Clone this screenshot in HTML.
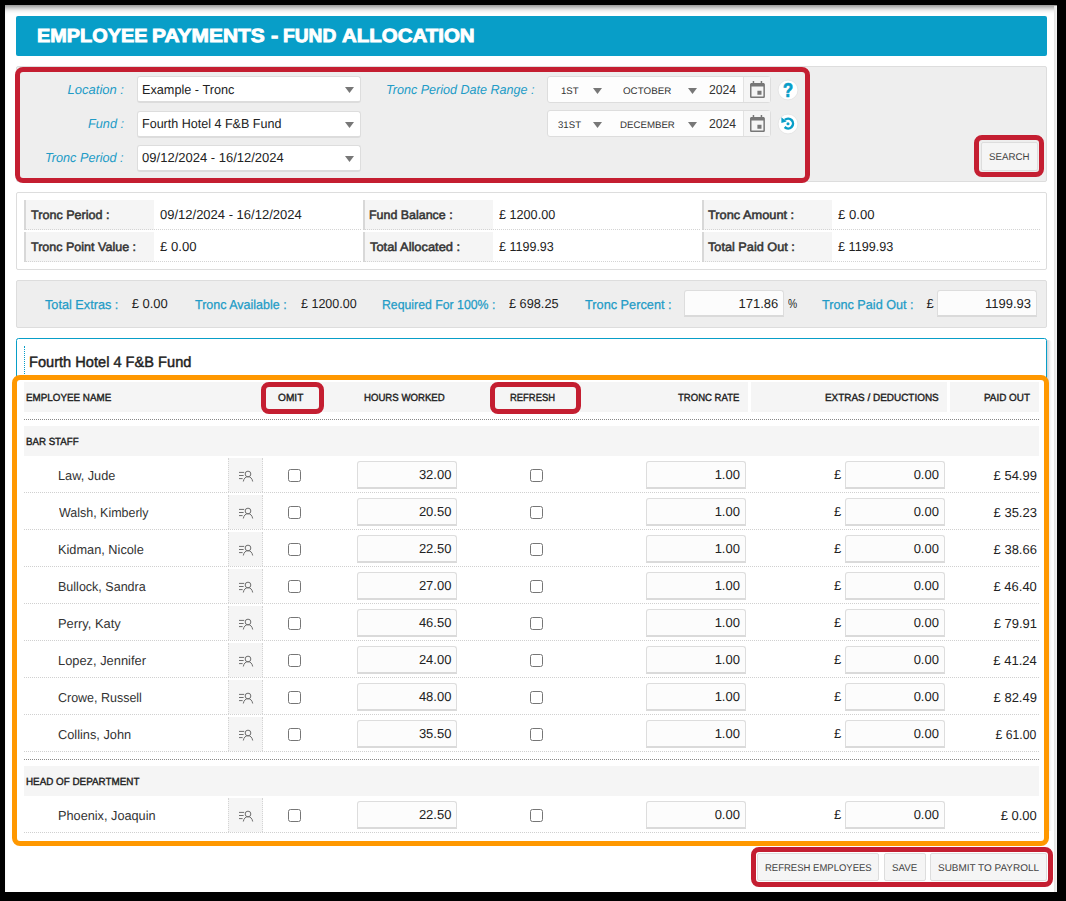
<!DOCTYPE html>
<html><head><meta charset="utf-8"><title>Employee Payments - Fund Allocation</title>
<style>
html,body{margin:0;padding:0;background:#000;}
body{width:1066px;height:901px;background:#000;position:relative;overflow:hidden;font-family:"Liberation Sans",sans-serif;}
.t{position:absolute;white-space:nowrap;font-family:"Liberation Sans",sans-serif;text-rendering:geometricPrecision;}
</style></head><body>
<div style="position:absolute;left:5px;top:5px;width:1052px;height:887px;box-sizing:border-box;background:#fff;box-shadow:inset 0 7px 6px -5px rgba(0,0,0,.55);"></div>
<div style="position:absolute;left:1054px;top:6px;width:3px;height:886px;box-sizing:border-box;background:linear-gradient(90deg,#e2e2e2,#f4f4f4);"></div>
<div style="position:absolute;left:16px;top:16px;width:1031px;height:40px;box-sizing:border-box;background:#089ec8;border-radius:2px;"></div>
<div class="t" style="top:24.60px;line-height:24px;font-size:19px;color:#fff;font-weight:bold;left:36.64px;transform:scaleX(1.0472);transform-origin:0 50%;-webkit-text-stroke:0.9px #fff;">EMPLOYEE</div>
<div class="t" style="top:24.60px;line-height:24px;font-size:19px;color:#fff;font-weight:bold;left:151.58px;transform:scaleX(1.1011);transform-origin:0 50%;-webkit-text-stroke:0.9px #fff;">PAYMENTS</div>
<div class="t" style="top:24.60px;line-height:24px;font-size:19px;color:#fff;font-weight:bold;left:271.20px;transform:scaleX(1.1429);transform-origin:0 50%;-webkit-text-stroke:0.9px #fff;">-</div>
<div class="t" style="top:24.60px;line-height:24px;font-size:19px;color:#fff;font-weight:bold;left:283.29px;transform:scaleX(1.0108);transform-origin:0 50%;-webkit-text-stroke:0.9px #fff;">FUND</div>
<div class="t" style="top:24.60px;line-height:24px;font-size:19px;color:#fff;font-weight:bold;left:342.27px;transform:scaleX(1.0773);transform-origin:0 50%;-webkit-text-stroke:0.9px #fff;">ALLOCATION</div>
<div style="position:absolute;left:16px;top:66px;width:1031px;height:116px;box-sizing:border-box;background:#eee;border:1px solid #ddd;border-radius:2px;"></div>
<div class="t" style="top:79.50px;line-height:20px;font-size:13px;color:#219bc6;font-style:italic;left:67.60px;">Location :</div>
<div class="t" style="top:113.50px;line-height:20px;font-size:13px;color:#219bc6;font-style:italic;left:88.01px;transform:scaleX(0.9766);transform-origin:0 50%;">Fund :</div>
<div class="t" style="top:147.50px;line-height:20px;font-size:13px;color:#219bc6;font-style:italic;left:45.43px;transform:scaleX(0.9739);transform-origin:0 50%;">Tronc Period :</div>
<div class="t" style="top:79.50px;line-height:20px;font-size:13px;color:#219bc6;font-style:italic;left:385.94px;transform:scaleX(0.9667);transform-origin:0 50%;">Tronc Period Date Range :</div>
<div style="position:absolute;left:137px;top:76px;width:224px;height:27px;box-sizing:border-box;background:#fff;border:1px solid #ddd;border-bottom:2px solid #dcdcdc;border-radius:3px;"><svg style="position:absolute;right:6.5px;top:10.2px" width="9" height="6" viewBox="0 0 9 6"><path d="M0 0H9L4.5 6Z" fill="#777"/></svg></div>
<div style="position:absolute;left:137px;top:110.5px;width:224px;height:27px;box-sizing:border-box;background:#fff;border:1px solid #ddd;border-bottom:2px solid #dcdcdc;border-radius:3px;"><svg style="position:absolute;right:6.5px;top:10.2px" width="9" height="6" viewBox="0 0 9 6"><path d="M0 0H9L4.5 6Z" fill="#777"/></svg></div>
<div style="position:absolute;left:137px;top:144.5px;width:224px;height:27px;box-sizing:border-box;background:#fff;border:1px solid #ddd;border-bottom:2px solid #dcdcdc;border-radius:3px;"><svg style="position:absolute;right:6.5px;top:10.2px" width="9" height="6" viewBox="0 0 9 6"><path d="M0 0H9L4.5 6Z" fill="#777"/></svg></div>
<div class="t" style="top:79.80px;line-height:20px;font-size:13px;color:#222;left:141.62px;transform:scaleX(0.9757);transform-origin:0 50%;">Example - Tronc</div>
<div class="t" style="top:113.80px;line-height:20px;font-size:13px;color:#222;left:141.64px;transform:scaleX(0.9644);transform-origin:0 50%;">Fourth Hotel 4 F&amp;B Fund</div>
<div class="t" style="top:147.80px;line-height:20px;font-size:13px;color:#222;left:142.10px;">09/12/2024 - 16/12/2024</div>
<div style="position:absolute;left:547px;top:76px;width:224px;height:27px;box-sizing:border-box;background:#fdfdfd;border:1px solid #ddd;border-radius:3px;"></div>
<div style="position:absolute;left:743px;top:77px;width:27px;height:25px;box-sizing:border-box;background:#f5f5f5;border-left:1px solid #e2e2e2;"><svg style="position:absolute;left:5.5px;top:4.1px" width="15" height="17" viewBox="0 0 15 17"><path d="M2.700 0h1.500v2.500H2.700zM10.700 0h1.500v2.500h-1.500z" fill="#777"/><path d="M1.600 1.900h11.700c.9 0 1.600.7 1.600 1.600v11.900c0 .9-.7 1.600-1.600 1.600H1.600c-.9 0-1.600-.7-1.600-1.600V3.500c0-.9.7-1.600 1.600-1.600zM1.500 5.600v9.900h11.900V5.600zM7.400 9.700h4.100v4.100H7.400z" fill="#777" fill-rule="evenodd"/></svg></div>
<div class="t" style="top:81.60px;line-height:20px;font-size:9.5px;color:#333;left:560.79px;transform:scaleX(1.0139);transform-origin:0 50%;">1ST</div>
<div class="t" style="top:81.60px;line-height:20px;font-size:9.5px;color:#333;left:623.34px;transform:scaleX(1.0316);transform-origin:0 50%;">OCTOBER</div>
<div class="t" style="top:80.10px;line-height:20px;font-size:13px;color:#333;left:709.44px;transform:scaleX(0.9378);transform-origin:0 50%;">2024</div>
<svg style="position:absolute;left:593px;top:88px" width="9" height="6" viewBox="0 0 9 6"><path d="M0 0H9L4.5 6Z" fill="#777"/></svg>
<svg style="position:absolute;left:688px;top:88px" width="9" height="6" viewBox="0 0 9 6"><path d="M0 0H9L4.5 6Z" fill="#777"/></svg>
<div style="position:absolute;left:547px;top:110px;width:224px;height:27px;box-sizing:border-box;background:#fdfdfd;border:1px solid #ddd;border-radius:3px;"></div>
<div style="position:absolute;left:743px;top:111px;width:27px;height:25px;box-sizing:border-box;background:#f5f5f5;border-left:1px solid #e2e2e2;"><svg style="position:absolute;left:5.5px;top:4.1px" width="15" height="17" viewBox="0 0 15 17"><path d="M2.700 0h1.500v2.500H2.700zM10.700 0h1.500v2.500h-1.500z" fill="#777"/><path d="M1.600 1.900h11.700c.9 0 1.600.7 1.600 1.600v11.900c0 .9-.7 1.600-1.600 1.600H1.600c-.9 0-1.600-.7-1.600-1.600V3.500c0-.9.7-1.600 1.600-1.600zM1.500 5.600v9.900h11.900V5.600zM7.400 9.700h4.100v4.100H7.400z" fill="#777" fill-rule="evenodd"/></svg></div>
<div class="t" style="top:115.60px;line-height:20px;font-size:9.5px;color:#333;left:557.95px;transform:scaleX(1.0134);transform-origin:0 50%;">31ST</div>
<div class="t" style="top:115.60px;line-height:20px;font-size:9.5px;color:#333;left:620.04px;transform:scaleX(1.0184);transform-origin:0 50%;">DECEMBER</div>
<div class="t" style="top:114.10px;line-height:20px;font-size:13px;color:#333;left:709.44px;transform:scaleX(0.9378);transform-origin:0 50%;">2024</div>
<svg style="position:absolute;left:593px;top:122px" width="9" height="6" viewBox="0 0 9 6"><path d="M0 0H9L4.5 6Z" fill="#777"/></svg>
<svg style="position:absolute;left:688px;top:122px" width="9" height="6" viewBox="0 0 9 6"><path d="M0 0H9L4.5 6Z" fill="#777"/></svg>
<svg style="position:absolute;left:776px;top:78px" width="24" height="24" viewBox="-12 -12 24 24"><circle r="9.900" fill="#fff" stroke="#e0e0e0" stroke-width="0.7"/><text transform="scale(0.86 1)" x="0.100" y="7.050" text-anchor="middle" font-family="Liberation Sans" font-weight="bold" font-size="19.3" fill="#089ec8" stroke="#089ec8" stroke-width="0.7">?</text></svg>
<svg style="position:absolute;left:775.6px;top:111.800px" width="24" height="24" viewBox="-12 -12 24 24"><circle r="9.900" fill="#fff" stroke="#e0e0e0" stroke-width="0.7"/><g transform="translate(0.100 -0.450)"><path d="M-3.300 -3.650A4.900 4.900 0 1 1 -3.460 3.460" fill="none" stroke="#089ec8" stroke-width="2.500"/><path d="M-6.700 -6.300L-6.700 -0.500L-1.500 -2.100z" fill="#089ec8"/><circle r="1.550" cx="-0.100" cy="0.200" fill="#089ec8"/></g></svg>
<div style="position:absolute;left:15px;top:67px;width:795px;height:116px;box-sizing:border-box;border:5px solid #c41e31;border-radius:8px;"></div>
<div style="position:absolute;left:981px;top:142px;width:56.5px;height:28.6px;box-sizing:border-box;background:#f5f5f5;border:1px solid #ddd;border-radius:2px;"></div>
<div class="t" style="top:148.20px;line-height:20px;font-size:9.8px;color:#444;left:988.85px;transform:scaleX(0.9896);transform-origin:0 50%;">SEARCH</div>
<div style="position:absolute;left:974px;top:135px;width:70.2px;height:42px;box-sizing:border-box;border:5px solid #c41e31;border-radius:8px;"></div>
<div style="position:absolute;left:16px;top:192px;width:1031px;height:78px;box-sizing:border-box;background:#fff;border:1px solid #ddd;border-radius:2px;"></div>
<div style="position:absolute;left:24px;top:200px;width:130px;height:29.5px;box-sizing:border-box;background:#f5f5f5;border-left:2px solid #d8d8d8;"></div>
<div style="position:absolute;left:24px;top:229px;width:337px;height:1px;box-sizing:border-box;border-top:1px dotted #d4d4d4;"></div>
<div class="t" style="top:204.60px;line-height:20px;font-size:12.3px;color:#333;-webkit-text-stroke:0.5px #333;left:31.15px;transform:scaleX(1.0235);transform-origin:0 50%;">Tronc Period :</div>
<div class="t" style="top:205.00px;line-height:20px;font-size:13px;color:#222;left:160.00px;">09/12/2024 - 16/12/2024</div>
<div style="position:absolute;left:363px;top:200px;width:130px;height:29.5px;box-sizing:border-box;background:#f5f5f5;border-left:2px solid #d8d8d8;"></div>
<div style="position:absolute;left:363px;top:229px;width:337px;height:1px;box-sizing:border-box;border-top:1px dotted #d4d4d4;"></div>
<div class="t" style="top:204.60px;line-height:20px;font-size:12.3px;color:#333;-webkit-text-stroke:0.5px #333;left:369.09px;transform:scaleX(1.0109);transform-origin:0 50%;">Fund Balance :</div>
<div class="t" style="top:205.00px;line-height:20px;font-size:13px;color:#222;left:499.46px;transform:scaleX(0.9719);transform-origin:0 50%;">£ 1200.00</div>
<div style="position:absolute;left:702px;top:200px;width:130px;height:29.5px;box-sizing:border-box;background:#f5f5f5;border-left:2px solid #d8d8d8;"></div>
<div style="position:absolute;left:702px;top:229px;width:337.5px;height:1px;box-sizing:border-box;border-top:1px dotted #d4d4d4;"></div>
<div class="t" style="top:204.60px;line-height:20px;font-size:12.3px;color:#333;-webkit-text-stroke:0.5px #333;left:708.24px;transform:scaleX(1.0388);transform-origin:0 50%;">Tronc Amount :</div>
<div class="t" style="top:205.00px;line-height:20px;font-size:13px;color:#222;left:837.70px;transform:scaleX(1.0095);transform-origin:0 50%;">£ 0.00</div>
<div style="position:absolute;left:24px;top:232px;width:130px;height:29.5px;box-sizing:border-box;background:#f5f5f5;border-left:2px solid #d8d8d8;"></div>
<div style="position:absolute;left:24px;top:261px;width:337px;height:1px;box-sizing:border-box;border-top:1px dotted #d4d4d4;"></div>
<div class="t" style="top:236.60px;line-height:20px;font-size:12.3px;color:#333;-webkit-text-stroke:0.5px #333;left:31.15px;transform:scaleX(1.0180);transform-origin:0 50%;">Tronc Point Value :</div>
<div class="t" style="top:237.00px;line-height:20px;font-size:13px;color:#222;left:160.20px;transform:scaleX(1.0095);transform-origin:0 50%;">£ 0.00</div>
<div style="position:absolute;left:363px;top:232px;width:130px;height:29.5px;box-sizing:border-box;background:#f5f5f5;border-left:2px solid #d8d8d8;"></div>
<div style="position:absolute;left:363px;top:261px;width:337px;height:1px;box-sizing:border-box;border-top:1px dotted #d4d4d4;"></div>
<div class="t" style="top:236.60px;line-height:20px;font-size:12.3px;color:#333;-webkit-text-stroke:0.5px #333;left:369.89px;transform:scaleX(1.0466);transform-origin:0 50%;">Total Allocated :</div>
<div class="t" style="top:237.00px;line-height:20px;font-size:13px;color:#222;left:499.46px;transform:scaleX(0.9636);transform-origin:0 50%;">£ 1199.93</div>
<div style="position:absolute;left:702px;top:232px;width:130px;height:29.5px;box-sizing:border-box;background:#f5f5f5;border-left:2px solid #d8d8d8;"></div>
<div style="position:absolute;left:702px;top:261px;width:337.5px;height:1px;box-sizing:border-box;border-top:1px dotted #d4d4d4;"></div>
<div class="t" style="top:236.60px;line-height:20px;font-size:12.3px;color:#333;-webkit-text-stroke:0.5px #333;left:708.24px;transform:scaleX(1.0329);transform-origin:0 50%;">Total Paid Out :</div>
<div class="t" style="top:237.00px;line-height:20px;font-size:13px;color:#222;left:837.71px;transform:scaleX(0.9725);transform-origin:0 50%;">£ 1199.93</div>
<div style="position:absolute;left:16px;top:280px;width:1031px;height:48px;box-sizing:border-box;background:#eee;border:1px solid #ddd;border-radius:2px;"></div>
<div class="t" style="top:294.80px;line-height:20px;font-size:13px;color:#219bc6;-webkit-text-stroke:0.25px #219bc6;left:45.03px;transform:scaleX(0.9760);transform-origin:0 50%;">Total Extras :</div>
<div class="t" style="top:294.80px;line-height:20px;font-size:13px;color:#219bc6;-webkit-text-stroke:0.25px #219bc6;left:194.53px;transform:scaleX(0.9605);transform-origin:0 50%;">Tronc Available :</div>
<div class="t" style="top:294.80px;line-height:20px;font-size:13px;color:#219bc6;-webkit-text-stroke:0.25px #219bc6;left:381.53px;transform:scaleX(0.9445);transform-origin:0 50%;">Required For 100% :</div>
<div class="t" style="top:294.80px;line-height:20px;font-size:13px;color:#219bc6;-webkit-text-stroke:0.25px #219bc6;left:584.53px;transform:scaleX(0.9796);transform-origin:0 50%;">Tronc Percent :</div>
<div class="t" style="top:294.80px;line-height:20px;font-size:13px;color:#219bc6;-webkit-text-stroke:0.25px #219bc6;left:821.78px;transform:scaleX(0.9725);transform-origin:0 50%;">Tronc Paid Out :</div>
<div class="t" style="top:293.70px;line-height:20px;font-size:13px;color:#222;left:131.70px;">£ 0.00</div>
<div class="t" style="top:293.70px;line-height:20px;font-size:13px;color:#222;left:300.71px;transform:scaleX(0.9632);transform-origin:0 50%;">£ 1200.00</div>
<div class="t" style="top:293.70px;line-height:20px;font-size:13px;color:#222;left:508.71px;transform:scaleX(0.9794);transform-origin:0 50%;">£ 698.25</div>
<div style="position:absolute;left:684px;top:290px;width:100px;height:27px;box-sizing:border-box;background:#fcfcfc;border:1px solid #ddd;border-bottom:2px solid #dadada;border-radius:3px 3px 0 0;"></div>
<div class="t" style="top:293.70px;line-height:20px;font-size:13px;color:#222;right:287.72px;">171.86</div>
<div class="t" style="top:293.70px;line-height:20px;font-size:13px;color:#222;left:787.93px;transform:scaleX(0.7897);transform-origin:0 50%;">%</div>
<div class="t" style="top:293.70px;line-height:20px;font-size:13px;color:#222;left:926.45px;">£</div>
<div style="position:absolute;left:937px;top:290px;width:100px;height:27px;box-sizing:border-box;background:#fcfcfc;border:1px solid #ddd;border-bottom:2px solid #dadada;border-radius:3px 3px 0 0;"></div>
<div class="t" style="top:293.70px;line-height:20px;font-size:13px;color:#222;right:34.97px;">1199.93</div>
<div style="position:absolute;left:1047px;top:340px;width:4.5px;height:491px;box-sizing:border-box;background:linear-gradient(90deg,rgba(60,70,90,.24),rgba(60,70,90,.07) 55%,rgba(60,70,90,0));border-radius:0 4px 0 0;"></div>
<div style="position:absolute;left:16px;top:338px;width:1031px;height:505px;box-sizing:border-box;background:#fff;border:1px solid #089ec8;border-radius:2.5px;"></div>
<div style="position:absolute;left:24px;top:346px;width:1px;height:30px;box-sizing:border-box;border-left:1px dotted #089ec8;"></div>
<div class="t" style="top:353.00px;line-height:20px;font-size:15px;color:#222;left:29.13px;transform:scaleX(0.9739);transform-origin:0 50%;-webkit-text-stroke:0.45px #222;">Fourth Hotel 4 F&amp;B Fund</div>
<div style="position:absolute;left:24px;top:382px;width:724px;height:30px;box-sizing:border-box;background:#f5f5f5;"></div>
<div style="position:absolute;left:750.5px;top:382px;width:196.5px;height:30px;box-sizing:border-box;background:#f5f5f5;"></div>
<div style="position:absolute;left:949.5px;top:382px;width:89.5px;height:30px;box-sizing:border-box;background:#f5f5f5;"></div>
<div class="t" style="top:388.70px;line-height:20px;font-size:10.4px;color:#222;-webkit-text-stroke:0.4px #222;left:25.69px;transform:scaleX(0.9458);transform-origin:0 50%;">EMPLOYEE NAME</div>
<div class="t" style="top:388.70px;line-height:20px;font-size:10.4px;color:#222;-webkit-text-stroke:0.4px #222;left:277.56px;transform:scaleX(0.9767);transform-origin:0 50%;">OMIT</div>
<div class="t" style="top:388.70px;line-height:20px;font-size:10.4px;color:#222;-webkit-text-stroke:0.4px #222;left:363.71px;transform:scaleX(0.9252);transform-origin:0 50%;">HOURS WORKED</div>
<div class="t" style="top:388.70px;line-height:20px;font-size:10.4px;color:#222;-webkit-text-stroke:0.4px #222;left:510.47px;transform:scaleX(0.9067);transform-origin:0 50%;">REFRESH</div>
<div class="t" style="top:388.70px;line-height:20px;font-size:10.4px;color:#222;-webkit-text-stroke:0.4px #222;left:678.27px;transform:scaleX(0.9193);transform-origin:0 50%;">TRONC RATE</div>
<div class="t" style="top:388.70px;line-height:20px;font-size:10.4px;color:#222;-webkit-text-stroke:0.4px #222;left:824.94px;transform:scaleX(0.9559);transform-origin:0 50%;">EXTRAS / DEDUCTIONS</div>
<div class="t" style="top:388.70px;line-height:20px;font-size:10.4px;color:#222;-webkit-text-stroke:0.4px #222;left:984.44px;transform:scaleX(0.9517);transform-origin:0 50%;">PAID OUT</div>
<div style="position:absolute;left:24px;top:419px;width:1015px;height:1px;box-sizing:border-box;border-top:1px dotted #888;"></div>
<div style="position:absolute;left:261px;top:382px;width:63px;height:32px;box-sizing:border-box;border:5px solid #c41e31;border-radius:8px;"></div>
<div style="position:absolute;left:490px;top:382px;width:90.8px;height:32px;box-sizing:border-box;border:5px solid #c41e31;border-radius:8px;"></div>
<div style="position:absolute;left:24px;top:426px;width:1015px;height:30px;box-sizing:border-box;background:#f5f5f5;"></div>
<div class="t" style="top:432.70px;line-height:20px;font-size:10.4px;color:#222;-webkit-text-stroke:0.4px #222;left:25.70px;transform:scaleX(0.9334);transform-origin:0 50%;">BAR STAFF</div>
<div class="t" style="top:466.20px;line-height:20px;font-size:13px;color:#333;left:57.72px;transform:scaleX(0.9787);transform-origin:0 50%;">Law, Jude</div>
<div style="position:absolute;left:228px;top:458px;width:35px;height:34px;box-sizing:border-box;background:#f5f5f5;border-left:1px dotted #d4d4d4;border-right:1px dotted #d4d4d4;"><svg style="position:absolute;left:-1px;top:0" width="35" height="34" viewBox="0 0 35 34"><g fill="none" stroke="#6e6e6e" stroke-width="1"><path d="M11 14.400h5.200M11 17.500h4.600M11 20.600h3.600"/><circle cx="20" cy="16" r="2.850"/><path d="M15.300 23.500c.6-3.200 2.300-4.800 4.700-4.800s4.100 1.600 4.700 4.800"/></g></svg></div>
<div style="position:absolute;left:288px;top:469.3px;width:12.7px;height:12.7px;box-sizing:border-box;background:#fff;border:1.3px solid #767676;border-radius:2.5px;"></div>
<div style="position:absolute;left:530px;top:469.3px;width:12.7px;height:12.7px;box-sizing:border-box;background:#fff;border:1.3px solid #767676;border-radius:2.5px;"></div>
<div style="position:absolute;left:357px;top:461px;width:100px;height:28px;box-sizing:border-box;background:#fcfcfc;border:1px solid #ddd;border-bottom:2px solid #dadada;border-radius:3px 3px 0 0;"></div>
<div class="t" style="top:464.60px;line-height:20px;font-size:13px;color:#222;right:614.57px;">32.00</div>
<div style="position:absolute;left:646px;top:461px;width:100px;height:28px;box-sizing:border-box;background:#fcfcfc;border:1px solid #ddd;border-bottom:2px solid #dadada;border-radius:3px 3px 0 0;"></div>
<div class="t" style="top:464.60px;line-height:20px;font-size:13px;color:#222;right:326.07px;">1.00</div>
<div class="t" style="top:464.60px;line-height:20px;font-size:13px;color:#222;left:833.95px;">£</div>
<div style="position:absolute;left:845px;top:461px;width:100px;height:28px;box-sizing:border-box;background:#fcfcfc;border:1px solid #ddd;border-bottom:2px solid #dadada;border-radius:3px 3px 0 0;"></div>
<div class="t" style="top:464.60px;line-height:20px;font-size:13px;color:#222;right:127.07px;">0.00</div>
<div class="t" style="top:466.00px;line-height:20px;font-size:13px;color:#222;right:29.07px;">£ 54.99</div>
<div style="position:absolute;left:24px;top:492px;width:1015px;height:1px;box-sizing:border-box;border-top:1px dotted #d0d0d0;"></div>
<div class="t" style="top:503.20px;line-height:20px;font-size:13px;color:#333;left:58.70px;transform:scaleX(0.9585);transform-origin:0 50%;">Walsh, Kimberly</div>
<div style="position:absolute;left:228px;top:495px;width:35px;height:34px;box-sizing:border-box;background:#f5f5f5;border-left:1px dotted #d4d4d4;border-right:1px dotted #d4d4d4;"><svg style="position:absolute;left:-1px;top:0" width="35" height="34" viewBox="0 0 35 34"><g fill="none" stroke="#6e6e6e" stroke-width="1"><path d="M11 14.400h5.200M11 17.500h4.600M11 20.600h3.600"/><circle cx="20" cy="16" r="2.850"/><path d="M15.300 23.500c.6-3.200 2.300-4.800 4.700-4.800s4.100 1.600 4.700 4.800"/></g></svg></div>
<div style="position:absolute;left:288px;top:506.3px;width:12.7px;height:12.7px;box-sizing:border-box;background:#fff;border:1.3px solid #767676;border-radius:2.5px;"></div>
<div style="position:absolute;left:530px;top:506.3px;width:12.7px;height:12.7px;box-sizing:border-box;background:#fff;border:1.3px solid #767676;border-radius:2.5px;"></div>
<div style="position:absolute;left:357px;top:498px;width:100px;height:28px;box-sizing:border-box;background:#fcfcfc;border:1px solid #ddd;border-bottom:2px solid #dadada;border-radius:3px 3px 0 0;"></div>
<div class="t" style="top:501.60px;line-height:20px;font-size:13px;color:#222;right:614.57px;">20.50</div>
<div style="position:absolute;left:646px;top:498px;width:100px;height:28px;box-sizing:border-box;background:#fcfcfc;border:1px solid #ddd;border-bottom:2px solid #dadada;border-radius:3px 3px 0 0;"></div>
<div class="t" style="top:501.60px;line-height:20px;font-size:13px;color:#222;right:326.07px;">1.00</div>
<div class="t" style="top:501.60px;line-height:20px;font-size:13px;color:#222;left:833.95px;">£</div>
<div style="position:absolute;left:845px;top:498px;width:100px;height:28px;box-sizing:border-box;background:#fcfcfc;border:1px solid #ddd;border-bottom:2px solid #dadada;border-radius:3px 3px 0 0;"></div>
<div class="t" style="top:501.60px;line-height:20px;font-size:13px;color:#222;right:127.07px;">0.00</div>
<div class="t" style="top:503.00px;line-height:20px;font-size:13px;color:#222;right:29.07px;">£ 35.23</div>
<div style="position:absolute;left:24px;top:529px;width:1015px;height:1px;box-sizing:border-box;border-top:1px dotted #d0d0d0;"></div>
<div class="t" style="top:540.20px;line-height:20px;font-size:13px;color:#333;left:57.72px;transform:scaleX(0.9814);transform-origin:0 50%;">Kidman, Nicole</div>
<div style="position:absolute;left:228px;top:532px;width:35px;height:34px;box-sizing:border-box;background:#f5f5f5;border-left:1px dotted #d4d4d4;border-right:1px dotted #d4d4d4;"><svg style="position:absolute;left:-1px;top:0" width="35" height="34" viewBox="0 0 35 34"><g fill="none" stroke="#6e6e6e" stroke-width="1"><path d="M11 14.400h5.200M11 17.500h4.600M11 20.600h3.600"/><circle cx="20" cy="16" r="2.850"/><path d="M15.300 23.500c.6-3.200 2.300-4.800 4.700-4.800s4.100 1.600 4.700 4.800"/></g></svg></div>
<div style="position:absolute;left:288px;top:543.3px;width:12.7px;height:12.7px;box-sizing:border-box;background:#fff;border:1.3px solid #767676;border-radius:2.5px;"></div>
<div style="position:absolute;left:530px;top:543.3px;width:12.7px;height:12.7px;box-sizing:border-box;background:#fff;border:1.3px solid #767676;border-radius:2.5px;"></div>
<div style="position:absolute;left:357px;top:535px;width:100px;height:28px;box-sizing:border-box;background:#fcfcfc;border:1px solid #ddd;border-bottom:2px solid #dadada;border-radius:3px 3px 0 0;"></div>
<div class="t" style="top:538.60px;line-height:20px;font-size:13px;color:#222;right:614.57px;">22.50</div>
<div style="position:absolute;left:646px;top:535px;width:100px;height:28px;box-sizing:border-box;background:#fcfcfc;border:1px solid #ddd;border-bottom:2px solid #dadada;border-radius:3px 3px 0 0;"></div>
<div class="t" style="top:538.60px;line-height:20px;font-size:13px;color:#222;right:326.07px;">1.00</div>
<div class="t" style="top:538.60px;line-height:20px;font-size:13px;color:#222;left:833.95px;">£</div>
<div style="position:absolute;left:845px;top:535px;width:100px;height:28px;box-sizing:border-box;background:#fcfcfc;border:1px solid #ddd;border-bottom:2px solid #dadada;border-radius:3px 3px 0 0;"></div>
<div class="t" style="top:538.60px;line-height:20px;font-size:13px;color:#222;right:127.07px;">0.00</div>
<div class="t" style="top:540.00px;line-height:20px;font-size:13px;color:#222;right:29.07px;">£ 38.66</div>
<div style="position:absolute;left:24px;top:566px;width:1015px;height:1px;box-sizing:border-box;border-top:1px dotted #d0d0d0;"></div>
<div class="t" style="top:577.20px;line-height:20px;font-size:13px;color:#333;left:57.74px;transform:scaleX(0.9632);transform-origin:0 50%;">Bullock, Sandra</div>
<div style="position:absolute;left:228px;top:569px;width:35px;height:34px;box-sizing:border-box;background:#f5f5f5;border-left:1px dotted #d4d4d4;border-right:1px dotted #d4d4d4;"><svg style="position:absolute;left:-1px;top:0" width="35" height="34" viewBox="0 0 35 34"><g fill="none" stroke="#6e6e6e" stroke-width="1"><path d="M11 14.400h5.200M11 17.500h4.600M11 20.600h3.600"/><circle cx="20" cy="16" r="2.850"/><path d="M15.300 23.500c.6-3.200 2.300-4.800 4.700-4.800s4.100 1.600 4.700 4.800"/></g></svg></div>
<div style="position:absolute;left:288px;top:580.3px;width:12.7px;height:12.7px;box-sizing:border-box;background:#fff;border:1.3px solid #767676;border-radius:2.5px;"></div>
<div style="position:absolute;left:530px;top:580.3px;width:12.7px;height:12.7px;box-sizing:border-box;background:#fff;border:1.3px solid #767676;border-radius:2.5px;"></div>
<div style="position:absolute;left:357px;top:572px;width:100px;height:28px;box-sizing:border-box;background:#fcfcfc;border:1px solid #ddd;border-bottom:2px solid #dadada;border-radius:3px 3px 0 0;"></div>
<div class="t" style="top:575.60px;line-height:20px;font-size:13px;color:#222;right:614.57px;">27.00</div>
<div style="position:absolute;left:646px;top:572px;width:100px;height:28px;box-sizing:border-box;background:#fcfcfc;border:1px solid #ddd;border-bottom:2px solid #dadada;border-radius:3px 3px 0 0;"></div>
<div class="t" style="top:575.60px;line-height:20px;font-size:13px;color:#222;right:326.07px;">1.00</div>
<div class="t" style="top:575.60px;line-height:20px;font-size:13px;color:#222;left:833.95px;">£</div>
<div style="position:absolute;left:845px;top:572px;width:100px;height:28px;box-sizing:border-box;background:#fcfcfc;border:1px solid #ddd;border-bottom:2px solid #dadada;border-radius:3px 3px 0 0;"></div>
<div class="t" style="top:575.60px;line-height:20px;font-size:13px;color:#222;right:127.07px;">0.00</div>
<div class="t" style="top:577.00px;line-height:20px;font-size:13px;color:#222;right:29.17px;">£ 46.40</div>
<div style="position:absolute;left:24px;top:603px;width:1015px;height:1px;box-sizing:border-box;border-top:1px dotted #d0d0d0;"></div>
<div class="t" style="top:614.20px;line-height:20px;font-size:13px;color:#333;left:57.71px;transform:scaleX(0.9915);transform-origin:0 50%;">Perry, Katy</div>
<div style="position:absolute;left:228px;top:606px;width:35px;height:34px;box-sizing:border-box;background:#f5f5f5;border-left:1px dotted #d4d4d4;border-right:1px dotted #d4d4d4;"><svg style="position:absolute;left:-1px;top:0" width="35" height="34" viewBox="0 0 35 34"><g fill="none" stroke="#6e6e6e" stroke-width="1"><path d="M11 14.400h5.200M11 17.500h4.600M11 20.600h3.600"/><circle cx="20" cy="16" r="2.850"/><path d="M15.300 23.500c.6-3.200 2.300-4.800 4.700-4.800s4.100 1.600 4.700 4.800"/></g></svg></div>
<div style="position:absolute;left:288px;top:617.3px;width:12.7px;height:12.7px;box-sizing:border-box;background:#fff;border:1.3px solid #767676;border-radius:2.5px;"></div>
<div style="position:absolute;left:530px;top:617.3px;width:12.7px;height:12.7px;box-sizing:border-box;background:#fff;border:1.3px solid #767676;border-radius:2.5px;"></div>
<div style="position:absolute;left:357px;top:609px;width:100px;height:28px;box-sizing:border-box;background:#fcfcfc;border:1px solid #ddd;border-bottom:2px solid #dadada;border-radius:3px 3px 0 0;"></div>
<div class="t" style="top:612.60px;line-height:20px;font-size:13px;color:#222;right:614.57px;">46.50</div>
<div style="position:absolute;left:646px;top:609px;width:100px;height:28px;box-sizing:border-box;background:#fcfcfc;border:1px solid #ddd;border-bottom:2px solid #dadada;border-radius:3px 3px 0 0;"></div>
<div class="t" style="top:612.60px;line-height:20px;font-size:13px;color:#222;right:326.07px;">1.00</div>
<div class="t" style="top:612.60px;line-height:20px;font-size:13px;color:#222;left:833.95px;">£</div>
<div style="position:absolute;left:845px;top:609px;width:100px;height:28px;box-sizing:border-box;background:#fcfcfc;border:1px solid #ddd;border-bottom:2px solid #dadada;border-radius:3px 3px 0 0;"></div>
<div class="t" style="top:612.60px;line-height:20px;font-size:13px;color:#222;right:127.07px;">0.00</div>
<div class="t" style="top:614.00px;line-height:20px;font-size:13px;color:#222;right:28.97px;">£ 79.91</div>
<div style="position:absolute;left:24px;top:640px;width:1015px;height:1px;box-sizing:border-box;border-top:1px dotted #d0d0d0;"></div>
<div class="t" style="top:651.20px;line-height:20px;font-size:13px;color:#333;left:57.71px;transform:scaleX(0.9890);transform-origin:0 50%;">Lopez, Jennifer</div>
<div style="position:absolute;left:228px;top:643px;width:35px;height:34px;box-sizing:border-box;background:#f5f5f5;border-left:1px dotted #d4d4d4;border-right:1px dotted #d4d4d4;"><svg style="position:absolute;left:-1px;top:0" width="35" height="34" viewBox="0 0 35 34"><g fill="none" stroke="#6e6e6e" stroke-width="1"><path d="M11 14.400h5.200M11 17.500h4.600M11 20.600h3.600"/><circle cx="20" cy="16" r="2.850"/><path d="M15.300 23.500c.6-3.200 2.300-4.800 4.700-4.800s4.100 1.600 4.700 4.800"/></g></svg></div>
<div style="position:absolute;left:288px;top:654.3px;width:12.7px;height:12.7px;box-sizing:border-box;background:#fff;border:1.3px solid #767676;border-radius:2.5px;"></div>
<div style="position:absolute;left:530px;top:654.3px;width:12.7px;height:12.7px;box-sizing:border-box;background:#fff;border:1.3px solid #767676;border-radius:2.5px;"></div>
<div style="position:absolute;left:357px;top:646px;width:100px;height:28px;box-sizing:border-box;background:#fcfcfc;border:1px solid #ddd;border-bottom:2px solid #dadada;border-radius:3px 3px 0 0;"></div>
<div class="t" style="top:649.60px;line-height:20px;font-size:13px;color:#222;right:614.57px;">24.00</div>
<div style="position:absolute;left:646px;top:646px;width:100px;height:28px;box-sizing:border-box;background:#fcfcfc;border:1px solid #ddd;border-bottom:2px solid #dadada;border-radius:3px 3px 0 0;"></div>
<div class="t" style="top:649.60px;line-height:20px;font-size:13px;color:#222;right:326.07px;">1.00</div>
<div class="t" style="top:649.60px;line-height:20px;font-size:13px;color:#222;left:833.95px;">£</div>
<div style="position:absolute;left:845px;top:646px;width:100px;height:28px;box-sizing:border-box;background:#fcfcfc;border:1px solid #ddd;border-bottom:2px solid #dadada;border-radius:3px 3px 0 0;"></div>
<div class="t" style="top:649.60px;line-height:20px;font-size:13px;color:#222;right:127.07px;">0.00</div>
<div class="t" style="top:651.00px;line-height:20px;font-size:13px;color:#222;right:29.27px;">£ 41.24</div>
<div style="position:absolute;left:24px;top:677px;width:1015px;height:1px;box-sizing:border-box;border-top:1px dotted #d0d0d0;"></div>
<div class="t" style="top:688.20px;line-height:20px;font-size:13px;color:#333;left:58.12px;transform:scaleX(0.9596);transform-origin:0 50%;">Crowe, Russell</div>
<div style="position:absolute;left:228px;top:680px;width:35px;height:34px;box-sizing:border-box;background:#f5f5f5;border-left:1px dotted #d4d4d4;border-right:1px dotted #d4d4d4;"><svg style="position:absolute;left:-1px;top:0" width="35" height="34" viewBox="0 0 35 34"><g fill="none" stroke="#6e6e6e" stroke-width="1"><path d="M11 14.400h5.200M11 17.500h4.600M11 20.600h3.600"/><circle cx="20" cy="16" r="2.850"/><path d="M15.300 23.500c.6-3.200 2.300-4.800 4.700-4.800s4.100 1.600 4.700 4.800"/></g></svg></div>
<div style="position:absolute;left:288px;top:691.3px;width:12.7px;height:12.7px;box-sizing:border-box;background:#fff;border:1.3px solid #767676;border-radius:2.5px;"></div>
<div style="position:absolute;left:530px;top:691.3px;width:12.7px;height:12.7px;box-sizing:border-box;background:#fff;border:1.3px solid #767676;border-radius:2.5px;"></div>
<div style="position:absolute;left:357px;top:683px;width:100px;height:28px;box-sizing:border-box;background:#fcfcfc;border:1px solid #ddd;border-bottom:2px solid #dadada;border-radius:3px 3px 0 0;"></div>
<div class="t" style="top:686.60px;line-height:20px;font-size:13px;color:#222;right:614.57px;">48.00</div>
<div style="position:absolute;left:646px;top:683px;width:100px;height:28px;box-sizing:border-box;background:#fcfcfc;border:1px solid #ddd;border-bottom:2px solid #dadada;border-radius:3px 3px 0 0;"></div>
<div class="t" style="top:686.60px;line-height:20px;font-size:13px;color:#222;right:326.07px;">1.00</div>
<div class="t" style="top:686.60px;line-height:20px;font-size:13px;color:#222;left:833.95px;">£</div>
<div style="position:absolute;left:845px;top:683px;width:100px;height:28px;box-sizing:border-box;background:#fcfcfc;border:1px solid #ddd;border-bottom:2px solid #dadada;border-radius:3px 3px 0 0;"></div>
<div class="t" style="top:686.60px;line-height:20px;font-size:13px;color:#222;right:127.07px;">0.00</div>
<div class="t" style="top:688.00px;line-height:20px;font-size:13px;color:#222;right:29.07px;">£ 82.49</div>
<div style="position:absolute;left:24px;top:714px;width:1015px;height:1px;box-sizing:border-box;border-top:1px dotted #d0d0d0;"></div>
<div class="t" style="top:725.20px;line-height:20px;font-size:13px;color:#333;left:58.11px;transform:scaleX(0.9836);transform-origin:0 50%;">Collins, John</div>
<div style="position:absolute;left:228px;top:717px;width:35px;height:34px;box-sizing:border-box;background:#f5f5f5;border-left:1px dotted #d4d4d4;border-right:1px dotted #d4d4d4;"><svg style="position:absolute;left:-1px;top:0" width="35" height="34" viewBox="0 0 35 34"><g fill="none" stroke="#6e6e6e" stroke-width="1"><path d="M11 14.400h5.200M11 17.500h4.600M11 20.600h3.600"/><circle cx="20" cy="16" r="2.850"/><path d="M15.300 23.500c.6-3.200 2.300-4.800 4.700-4.800s4.100 1.600 4.700 4.800"/></g></svg></div>
<div style="position:absolute;left:288px;top:728.3px;width:12.7px;height:12.7px;box-sizing:border-box;background:#fff;border:1.3px solid #767676;border-radius:2.5px;"></div>
<div style="position:absolute;left:530px;top:728.3px;width:12.7px;height:12.7px;box-sizing:border-box;background:#fff;border:1.3px solid #767676;border-radius:2.5px;"></div>
<div style="position:absolute;left:357px;top:720px;width:100px;height:28px;box-sizing:border-box;background:#fcfcfc;border:1px solid #ddd;border-bottom:2px solid #dadada;border-radius:3px 3px 0 0;"></div>
<div class="t" style="top:723.60px;line-height:20px;font-size:13px;color:#222;right:614.57px;">35.50</div>
<div style="position:absolute;left:646px;top:720px;width:100px;height:28px;box-sizing:border-box;background:#fcfcfc;border:1px solid #ddd;border-bottom:2px solid #dadada;border-radius:3px 3px 0 0;"></div>
<div class="t" style="top:723.60px;line-height:20px;font-size:13px;color:#222;right:326.07px;">1.00</div>
<div class="t" style="top:723.60px;line-height:20px;font-size:13px;color:#222;left:833.95px;">£</div>
<div style="position:absolute;left:845px;top:720px;width:100px;height:28px;box-sizing:border-box;background:#fcfcfc;border:1px solid #ddd;border-bottom:2px solid #dadada;border-radius:3px 3px 0 0;"></div>
<div class="t" style="top:723.60px;line-height:20px;font-size:13px;color:#222;right:127.07px;">0.00</div>
<div class="t" style="top:725.00px;line-height:20px;font-size:13px;color:#222;right:29.20px;transform:scaleX(0.9415);transform-origin:100% 50%;">£ 61.00</div>
<div style="position:absolute;left:24px;top:751px;width:1015px;height:1px;box-sizing:border-box;border-top:1px dotted #d0d0d0;"></div>
<div style="position:absolute;left:24px;top:759px;width:1015px;height:1px;box-sizing:border-box;border-top:1px dotted #888;"></div>
<div style="position:absolute;left:24px;top:766px;width:1015px;height:30px;box-sizing:border-box;background:#f5f5f5;"></div>
<div class="t" style="top:772.70px;line-height:20px;font-size:10.4px;color:#222;-webkit-text-stroke:0.4px #222;left:25.69px;transform:scaleX(0.9474);transform-origin:0 50%;">HEAD OF DEPARTMENT</div>
<div class="t" style="top:806.20px;line-height:20px;font-size:13px;color:#333;left:57.72px;transform:scaleX(0.9784);transform-origin:0 50%;">Phoenix, Joaquin</div>
<div style="position:absolute;left:228px;top:798px;width:35px;height:34px;box-sizing:border-box;background:#f5f5f5;border-left:1px dotted #d4d4d4;border-right:1px dotted #d4d4d4;"><svg style="position:absolute;left:-1px;top:0" width="35" height="34" viewBox="0 0 35 34"><g fill="none" stroke="#6e6e6e" stroke-width="1"><path d="M11 14.400h5.200M11 17.500h4.600M11 20.600h3.600"/><circle cx="20" cy="16" r="2.850"/><path d="M15.300 23.500c.6-3.200 2.300-4.800 4.700-4.800s4.100 1.600 4.700 4.800"/></g></svg></div>
<div style="position:absolute;left:288px;top:809.3px;width:12.7px;height:12.7px;box-sizing:border-box;background:#fff;border:1.3px solid #767676;border-radius:2.5px;"></div>
<div style="position:absolute;left:530px;top:809.3px;width:12.7px;height:12.7px;box-sizing:border-box;background:#fff;border:1.3px solid #767676;border-radius:2.5px;"></div>
<div style="position:absolute;left:357px;top:801px;width:100px;height:28px;box-sizing:border-box;background:#fcfcfc;border:1px solid #ddd;border-bottom:2px solid #dadada;border-radius:3px 3px 0 0;"></div>
<div class="t" style="top:804.60px;line-height:20px;font-size:13px;color:#222;right:614.57px;">22.50</div>
<div style="position:absolute;left:646px;top:801px;width:100px;height:28px;box-sizing:border-box;background:#fcfcfc;border:1px solid #ddd;border-bottom:2px solid #dadada;border-radius:3px 3px 0 0;"></div>
<div class="t" style="top:804.60px;line-height:20px;font-size:13px;color:#222;right:326.07px;">0.00</div>
<div class="t" style="top:804.60px;line-height:20px;font-size:13px;color:#222;left:833.95px;">£</div>
<div style="position:absolute;left:845px;top:801px;width:100px;height:28px;box-sizing:border-box;background:#fcfcfc;border:1px solid #ddd;border-bottom:2px solid #dadada;border-radius:3px 3px 0 0;"></div>
<div class="t" style="top:804.60px;line-height:20px;font-size:13px;color:#222;right:127.07px;">0.00</div>
<div class="t" style="top:806.00px;line-height:20px;font-size:13px;color:#222;right:29.17px;">£ 0.00</div>
<div style="position:absolute;left:24px;top:832px;width:1015px;height:1px;box-sizing:border-box;border-top:1px dotted #d0d0d0;"></div>
<div style="position:absolute;left:12px;top:375px;width:1037px;height:471px;box-sizing:border-box;border:5px solid #ff9800;border-radius:8px;"></div>
<div style="position:absolute;left:757px;top:853px;width:122px;height:28px;box-sizing:border-box;background:#f5f5f5;border:1px solid #ddd;border-radius:2px;"></div>
<div style="position:absolute;left:884px;top:853px;width:41.5px;height:28px;box-sizing:border-box;background:#f5f5f5;border:1px solid #ddd;border-radius:2px;"></div>
<div style="position:absolute;left:930px;top:853px;width:117px;height:28px;box-sizing:border-box;background:#f5f5f5;border:1px solid #ddd;border-radius:2px;"></div>
<div class="t" style="top:858.60px;line-height:20px;font-size:9.8px;color:#444;left:764.97px;transform:scaleX(0.9699);transform-origin:0 50%;">REFRESH EMPLOYEES</div>
<div class="t" style="top:858.60px;line-height:20px;font-size:9.8px;color:#444;left:891.85px;transform:scaleX(0.9926);transform-origin:0 50%;">SAVE</div>
<div class="t" style="top:858.60px;line-height:20px;font-size:9.8px;color:#444;left:937.59px;transform:scaleX(1.0176);transform-origin:0 50%;">SUBMIT TO PAYROLL</div>
<div style="position:absolute;left:751px;top:847px;width:302px;height:40px;box-sizing:border-box;border:5px solid #c41e31;border-radius:8px;"></div>
</body></html>
